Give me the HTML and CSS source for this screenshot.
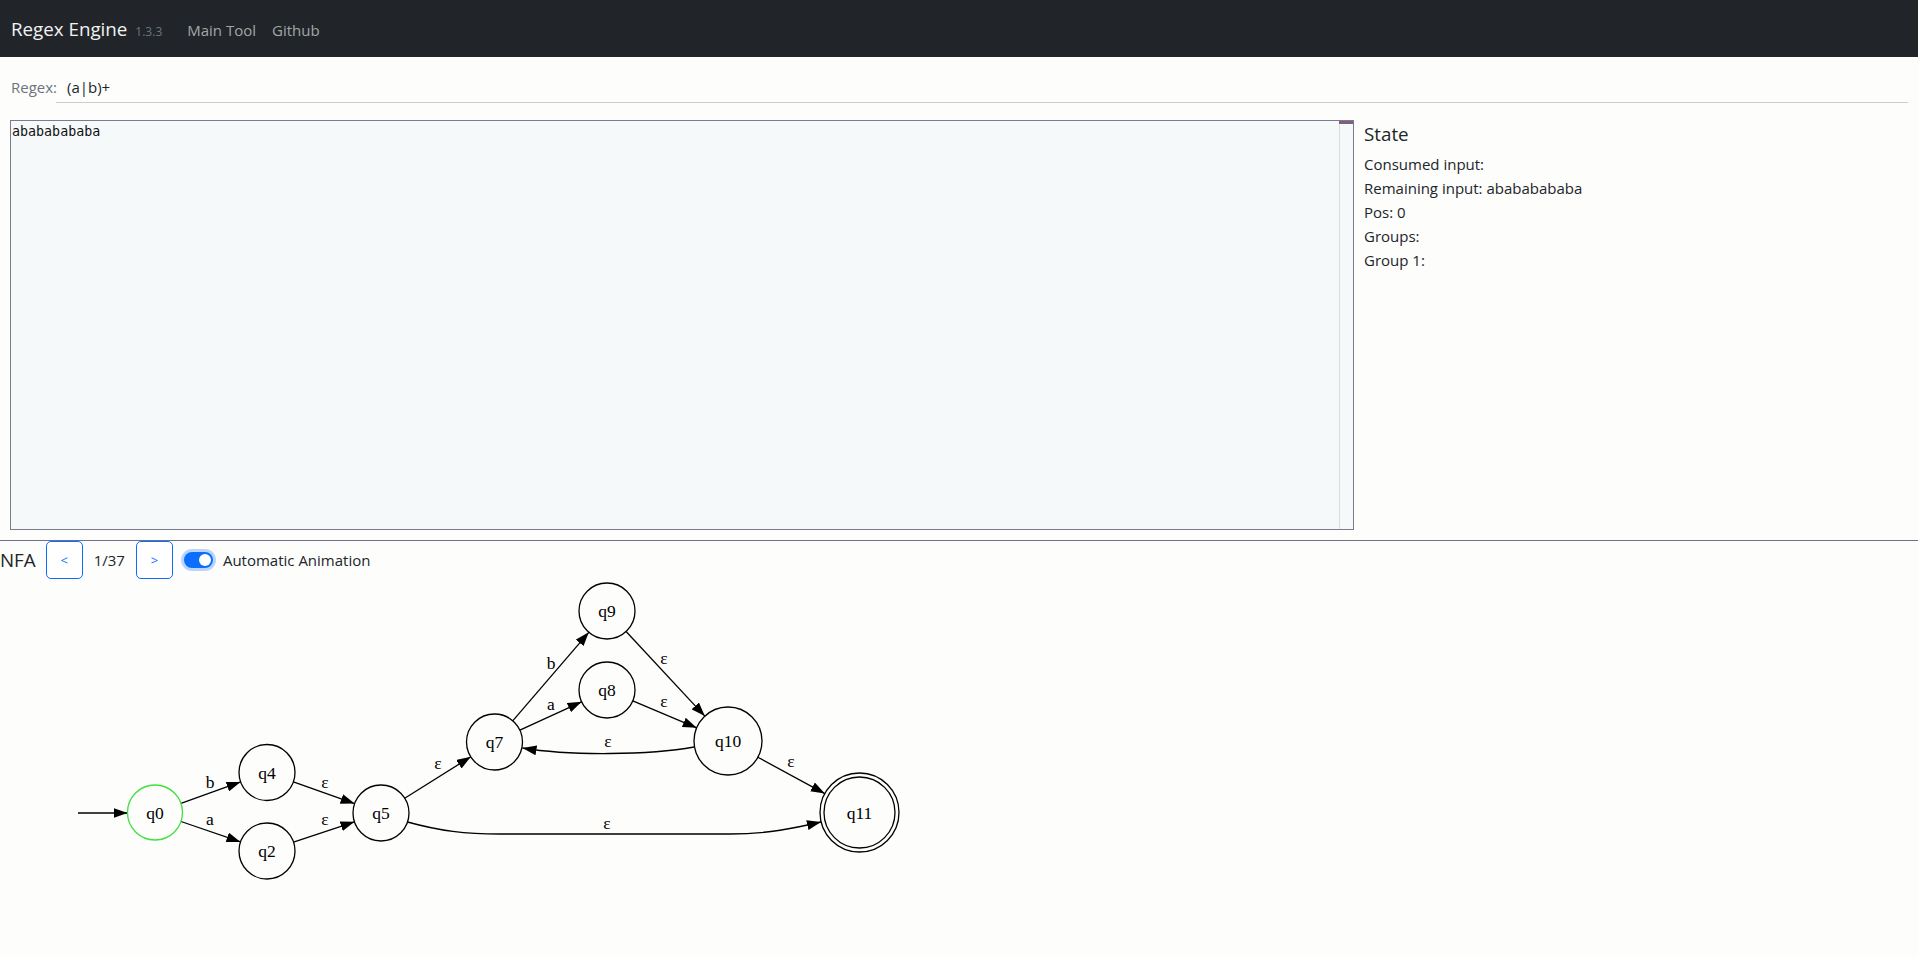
FILE: index.html
```html
<!DOCTYPE html>
<html lang="en">
<head>
<meta charset="utf-8">
<title>Regex Engine</title>
<link rel="stylesheet" href="styles.css">
</head>
<body>
<nav class="navbar">
  <span class="brand">Regex Engine</span>
  <span class="version">1.3.3</span>
  <a class="nav-link">Main Tool</a>
  <a class="nav-link">Github</a>
</nav>

<div class="regex-row">
  <label class="regex-label">Regex:</label>
  <div class="regex-input">(a|b)+</div>
</div>

<div class="main">
  <div class="editor">
    <div class="editor-text">abababababa</div>
    <div class="editor-scroll"><div class="editor-thumb"></div></div>
  </div>
  <div class="state">
    <h5 class="state-title">State</h5>
    <div class="state-line">Consumed input:</div>
    <div class="state-line">Remaining input: abababababa</div>
    <div class="state-line">Pos: 0</div>
    <div class="state-line">Groups:</div>
    <div class="state-line">Group 1:</div>
  </div>
</div>

<div class="divider"></div>

<div class="nfa-bar">
  <span class="nfa-title">NFA</span>
  <button class="step-btn">&lt;</button>
  <span class="counter">1/37</span>
  <button class="step-btn">&gt;</button>
  <span class="switch"><span class="switch-knob"></span></span>
  <span class="switch-label">Automatic Animation</span>
</div>

<svg class="graph" width="1000" height="370" viewBox="0 579 1000 370" xmlns="http://www.w3.org/2000/svg">
  <defs>
    <marker id="ah" viewBox="0 0 14 10" markerWidth="14" markerHeight="10" refX="14" refY="5" orient="auto" markerUnits="userSpaceOnUse">
      <path d="M0,0 L14,5 L0,10 z" fill="#000"/>
    </marker>
  </defs>
  <g class="edges" fill="none" stroke="#000" stroke-width="1.3">
    <path d="M78,813 L127.5,813" marker-end="url(#ah)"/>
    <path d="M181,803.3 L240.6,781.9" marker-end="url(#ah)"/>
    <path d="M181,821.5 L240.5,841.9" marker-end="url(#ah)"/>
    <path d="M293.4,781.9 L354.6,803.6" marker-end="url(#ah)"/>
    <path d="M293.5,842.1 L354.5,821.8" marker-end="url(#ah)"/>
    <path d="M404.7,798.2 L470.8,756.8" marker-end="url(#ah)"/>
    <path d="M512.7,720.8 L588.8,632.3" marker-end="url(#ah)"/>
    <path d="M519.9,730.2 L581.6,701.8" marker-end="url(#ah)"/>
    <path d="M626.1,631.5 L704.8,716.1" marker-end="url(#ah)"/>
    <path d="M632.8,700.9 L696.7,727.8" marker-end="url(#ah)"/>
    <path d="M694,747 C650,755 570,756 522.5,748" marker-end="url(#ah)"/>
    <path d="M757.9,757.3 L824.8,793.6" marker-end="url(#ah)"/>
    <path d="M407.5,822 C440,831 465,834 500,834 L730,834 C768,834 795,828 821,822" marker-end="url(#ah)"/>
  </g>
  <g class="nodes" fill="none" stroke="#000" stroke-width="1.3">
    <circle cx="155" cy="812.5" r="27.5" stroke="#3fe03f"/>
    <circle cx="267" cy="772.5" r="28"/>
    <circle cx="267" cy="851" r="28"/>
    <circle cx="381" cy="813" r="28"/>
    <circle cx="494.5" cy="742" r="28"/>
    <circle cx="607" cy="690" r="28"/>
    <circle cx="607" cy="611" r="28"/>
    <circle cx="728" cy="741" r="34"/>
    <circle cx="859.5" cy="812.5" r="35.5"/>
    <circle cx="859.5" cy="812.5" r="39.5"/>
  </g>
  <g class="node-labels" text-anchor="middle">
    <text x="155" y="818.5">q0</text>
    <text x="267" y="778.5">q4</text>
    <text x="267" y="857">q2</text>
    <text x="381" y="819">q5</text>
    <text x="494.5" y="748">q7</text>
    <text x="607" y="696">q8</text>
    <text x="607" y="617">q9</text>
    <text x="728" y="747">q10</text>
    <text x="859.5" y="818.5">q11</text>
  </g>
  <g class="edge-labels" text-anchor="middle">
    <text x="210" y="788">b</text>
    <text x="210" y="825">a</text>
    <text x="325" y="788">ε</text>
    <text x="325" y="825">ε</text>
    <text x="438" y="769">ε</text>
    <text x="551" y="669">b</text>
    <text x="551" y="710">a</text>
    <text x="664" y="664">ε</text>
    <text x="664" y="707">ε</text>
    <text x="608" y="747">ε</text>
    <text x="791" y="767">ε</text>
    <text x="607" y="829">ε</text>
  </g>
</svg>
</body>
</html>
```

FILE: styles.css
```css
html, body {
  margin: 0;
  padding: 0;
}

body {
  background: #fdfdfc;
  color: #212529;
  font-family: "Open Sans", "Noto Sans", sans-serif;
  font-size: 15px;
  line-height: 24px;
  overflow: hidden;
  width: 1918px;
  height: 956px;
}

.navbar {
  display: flex;
  align-items: baseline;
  height: 57px;
  box-sizing: border-box;
  padding: 15px 0 0 11px;
  background: #212529;
}

.brand {
  font-size: 18.75px;
  line-height: 28px;
  color: #f2f2f2;
}

.version {
  font-size: 12px;
  color: #6c757d;
  margin-left: 8px;
  margin-right: 25px;
}

.nav-link {
  color: #a3a5a7;
  font-size: 15px;
  margin-right: 16px;
}

.regex-row {
  display: flex;
  padding: 18px 10px 0 11px;
}

.regex-label {
  width: 45px;
  color: #6c757d;
  line-height: 24px;
}

.regex-input {
  flex: 1;
  padding: 0 0 3px 11px;
  border-bottom: 1px solid #c9cbd6;
  line-height: 24px;
  color: #212529;
}

.main {
  display: flex;
  margin-top: 17px;
  padding-left: 10px;
  margin-bottom: 10px;
}

.editor {
  display: flex;
  width: 1344px;
  height: 410px;
  box-sizing: border-box;
  border: 1px solid #7b7b8d;
  background: #f5f9fa;
}

.editor-text {
  flex: 1;
  padding: 3px 0 0 1px;
  font-family: "DejaVu Sans Mono", "Liberation Mono", monospace;
  font-size: 13.33px;
  line-height: 16px;
  color: #111;
}

.editor-scroll {
  width: 13px;
  border-left: 1px solid #d9dee2;
}

.editor-thumb {
  height: 3px;
  margin-left: -1px;
  background: #7f5f80;
}

.state {
  margin-left: 10px;
  padding-top: 3px;
}

.state-title {
  margin: 0 0 6px 0;
  font-size: 18.75px;
  font-weight: 400;
  line-height: 22.5px;
}

.state-line {
  line-height: 24px;
}

.divider {
  height: 1px;
  background: #6f6f8a;
}

.nfa-bar {
  display: flex;
  align-items: center;
  height: 38px;
}

.nfa-title {
  font-size: 18.75px;
  margin-right: 10px;
  line-height: 24px;
}

.step-btn {
  width: 37px;
  height: 38px;
  padding: 0;
  border: 1px solid #0d6efd;
  border-radius: 5px;
  background: #ffffff;
  color: #0d6efd;
  font-family: "Open Sans", sans-serif;
  font-size: 13px;
}

.counter {
  margin: 0 11px;
}

.switch {
  position: relative;
  width: 29px;
  height: 16px;
  margin-left: 11px;
  border-radius: 8px;
  background: #0d6efd;
  box-shadow: 0 0 0 3px rgba(13, 110, 253, 0.28);
}

.switch-knob {
  position: absolute;
  top: 2px;
  right: 2px;
  width: 12px;
  height: 12px;
  border-radius: 50%;
  background: #ffffff;
}

.switch-label {
  margin-left: 10px;
}

.graph {
  display: block;
}

.graph text {
  font-family: "Liberation Serif", "Times New Roman", serif;
  font-size: 17.5px;
  fill: #000;
}
```
